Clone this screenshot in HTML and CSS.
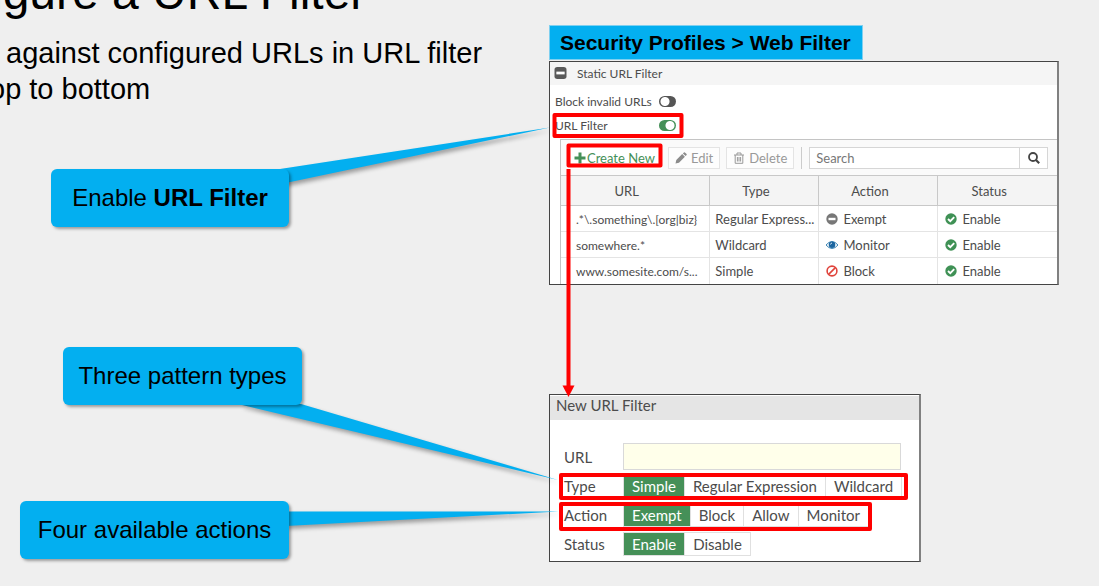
FILE: index.html
```html
<!DOCTYPE html>
<html lang="en">
<head>
<meta charset="utf-8">
<title>URL Filter</title>
<link rel="stylesheet" href="styles.css">
</head>
<body>
<main class="slide">
  <section class="copy">
    <h1 class="title">igure a URL Filter</h1>
    <p class="line">against configured URLs in URL filter</p>
    <p class="line line-cut">op to bottom</p>
  </section>

  <section class="screens">
    <h2 class="path">Security Profiles &gt; Web Filter</h2>

    <div class="panel static-panel">
      <header class="static-head">
        <svg class="collapse" viewBox="0 0 13 13"><rect x="0" y="0" width="13" height="13" rx="3" fill="#5a5a5a"/><rect x="2" y="5" width="9" height="3" fill="#fff"/></svg>
        <span>Static URL Filter</span>
      </header>
      <div class="option">
        <label class="option-label" for="invalid">Block invalid URLs</label>
        <input class="switch" type="checkbox" id="invalid">
      </div>
      <div class="option">
        <label class="option-label" for="filter">URL Filter</label>
        <input class="switch" type="checkbox" id="filter" checked>
      </div>
      <div class="listing">
        <div class="toolbar">
          <button class="tool create" type="button"><svg class="ico" viewBox="0 0 12 12"><path d="M4.500 0.500h3v4H11.500v3H7.500V11.500h-3V7.500H0.500v-3h4z" fill="#459058"/></svg>Create New</button>
          <button class="tool edit" type="button"><svg class="ico" viewBox="0 0 12 12"><path d="M0.500 11.500L1.300 8L7.200 2.100L9.900 4.800L4 10.700ZM7.900 1.400L8.900 0.400Q9.400 0 9.900 0.400L11.600 2.100Q12 2.600 11.600 3.100L10.600 4.100Z" fill="#8c8c8c"/></svg>Edit</button>
          <button class="tool delete" type="button"><svg class="ico" viewBox="0 0 12 12"><path d="M1 3h10M4 3V1h4v2M2.200 3v8.300h7.600V3M4.400 5v4.500M6 5v4.500M7.600 5v4.500" fill="none" stroke="#999"/></svg>Delete</button>
          <span class="divider"></span>
          <form class="search">
            <input class="search-box" type="text" placeholder="Search" aria-label="Search">
            <button class="search-go" type="button" aria-label="Go"><svg class="ico" viewBox="0 0 12 12"><circle cx="5" cy="5" r="4" fill="none" stroke="#444" stroke-width="1.800"/><path d="M8 8l3.200 3.200" stroke="#444" stroke-width="2.200"/></svg></button>
          </form>
        </div>
        <table class="rules">
          <colgroup><col class="c-url"><col class="c-type"><col class="c-action"><col class="c-status"></colgroup>
          <thead><tr><th>URL</th><th>Type</th><th>Action</th><th>Status</th></tr></thead>
          <tbody>
            <tr>
              <td>.*\.something\.[org|biz}</td><td>Regular Express...</td>
              <td><svg class="mark" viewBox="0 0 12 12"><circle cx="6" cy="6" r="5.700" fill="#777"/><rect x="2.500" y="4.800" width="7" height="2.400" fill="#fff"/></svg>Exempt</td>
              <td><svg class="mark" viewBox="0 0 12 12"><circle cx="6" cy="6" r="5.700" fill="#3f9155"/><path d="M3 6l2.300 2.200L9.200 4.200" fill="none" stroke="#fff" stroke-width="1.900"/></svg>Enable</td>
            </tr>
            <tr>
              <td>somewhere.*</td><td>Wildcard</td>
              <td><svg class="mark" viewBox="0 0 12 12"><path d="M0 6Q6-1 12 6Q6 13 0 6Z" fill="#fff" stroke="#3e86b5"/><circle cx="6" cy="5.700" r="3.300" fill="#1c66a0"/><path d="M4.500 5.500Q4.600 4.200 6 4" fill="none" stroke="#fff" stroke-width=".8"/></svg>Monitor</td>
              <td><svg class="mark" viewBox="0 0 12 12"><circle cx="6" cy="6" r="5.700" fill="#3f9155"/><path d="M3 6l2.300 2.200L9.200 4.200" fill="none" stroke="#fff" stroke-width="1.900"/></svg>Enable</td>
            </tr>
            <tr>
              <td>www.somesite.com/s...</td><td>Simple</td>
              <td><svg class="mark" viewBox="0 0 12 12"><g fill="none" stroke="#e0443c" stroke-width="1.600"><circle cx="6" cy="6" r="4.900"/><path d="M2.600 9.400L9.400 2.600"/></g></svg>Block</td>
              <td><svg class="mark" viewBox="0 0 12 12"><circle cx="6" cy="6" r="5.700" fill="#3f9155"/><path d="M3 6l2.300 2.200L9.200 4.200" fill="none" stroke="#fff" stroke-width="1.900"/></svg>Enable</td>
            </tr>
          </tbody>
        </table>
      </div>
    </div>

    <form class="panel new-panel">
      <header class="new-head">New URL Filter</header>
      <div class="fields">
        <div class="field">
          <label class="field-label" for="url">URL</label>
          <input class="url-box" type="text" id="url">
        </div>
        <div class="field" role="radiogroup" aria-label="Type">
          <span class="field-label">Type</span>
          <div class="choices">
            <label class="choice"><input type="radio" name="type" checked>Simple</label>
            <label class="choice"><input type="radio" name="type">Regular Expression</label>
            <label class="choice"><input type="radio" name="type">Wildcard</label>
          </div>
        </div>
        <div class="field" role="radiogroup" aria-label="Action">
          <span class="field-label">Action</span>
          <div class="choices">
            <label class="choice"><input type="radio" name="action" checked>Exempt</label>
            <label class="choice"><input type="radio" name="action">Block</label>
            <label class="choice"><input type="radio" name="action">Allow</label>
            <label class="choice"><input type="radio" name="action">Monitor</label>
          </div>
        </div>
        <div class="field" role="radiogroup" aria-label="Status">
          <span class="field-label">Status</span>
          <div class="choices">
            <label class="choice"><input type="radio" name="status" checked>Enable</label>
            <label class="choice"><input type="radio" name="status">Disable</label>
          </div>
        </div>
      </div>
    </form>
  </section>

  <div class="notes">
    <svg class="pointers" width="1099" height="586" viewBox="0 0 1099 586">
      <g class="tails" fill="#03aff0">
        <path d="M280 169L550 127.500L288 182.500L280 184Z"/>
        <path d="M242 404L301 404L558 480L242 405Z"/>
        <path d="M286 511.500L559 511.500L286 526Z"/>
      </g>
      <g fill="none" stroke="#f00" stroke-width="4" stroke-linejoin="round">
        <rect x="554.500" y="115" width="127" height="21"/>
        <rect x="568.500" y="145.500" width="92" height="20"/>
        <rect x="561" y="475" width="345" height="23"/>
        <rect x="561" y="504" width="309" height="25"/>
        <path d="M568.500 169V388"/>
      </g>
      <path d="M562.500 385.500H574.500L568.500 397Z" fill="#f00"/>
    </svg>
    <div class="callout callout-enable"><span>Enable <strong>URL Filter</strong></span></div>
    <div class="callout callout-types">Three pattern types</div>
    <div class="callout callout-actions">Four available actions</div>
  </div>
</main>
</body>
</html>
```
FILE: styles.css
```css
* { box-sizing: border-box; }
body {
  margin: 0;
  background: #efefef;
  color: #000;
  font-family: "Liberation Sans", Arial, sans-serif;
  overflow: hidden;
}
button, input { font: inherit; color: inherit; margin: 0; }
.slide {
  position: relative;
  display: grid;
  grid-template-columns: 549px minmax(0, 1fr);
  min-height: 100vh;
  overflow: hidden;
}

/* Left copy */
.title {
  margin: -34px 0 15px;
  font-size: 48px;
  line-height: 54px;
  font-weight: 400;
  text-indent: -8px;
  white-space: nowrap;
}
.line {
  margin: 0;
  padding-left: 6px;
  font-size: 29px;
  line-height: 36px;
  white-space: nowrap;
}
.line-cut { padding-left: 0; text-indent: -11px; }

/* Right screens */
.screens { padding: 25px 40px 20px 0; }
.path {
  width: fit-content;
  margin: 0 0 1px;
  padding: 0 11px 0 10px;
  border: 1px solid #7fd0f0;
  background: #03aff0;
  font-size: 21px;
  line-height: 33px;
}
.panel {
  border: 1px solid #444;
  border-right: 2px solid #808080;
  background: #fff;
  color: #4c4c4c;
  font-family: Lato, sans-serif;
}
.static-panel { font-size: 13px; margin-bottom: 109px; }
.static-head {
  display: flex;
  align-items: center;
  gap: 10px;
  height: 23px;
  margin-bottom: 4px;
  padding: 0 0 1px 4px;
  background: #f5f5f5;
  font-size: 12px;
}
.collapse { width: 13px; height: 12px; }
.option {
  display: flex;
  align-items: center;
  height: 24px;
  padding-left: 5px;
  font-size: 12px;
}
.option-label { width: 104px; white-space: nowrap; }
.switch {
  appearance: none;
  width: 17px;
  height: 11px;
  border-radius: 6px;
  background: radial-gradient(circle at 6px 50%, #fff 4px, #555 5px);
}
.switch:checked { background: radial-gradient(circle at 11px 50%, #fff 4px, #459058 5px); }
.listing {
  margin: 2px 0 0 10px;
  border: solid #c4c4c4;
  border-width: 1px 0 0 1px;
}
.toolbar {
  display: flex;
  align-items: center;
  height: 35px;
  padding: 0 9px 0 6px;
  gap: 6px;
  background: #fafafa;
}
.tool {
  display: flex;
  align-items: center;
  gap: 4px;
  height: 22px;
  padding: 0 6px;
  border: 1px solid #e4e4e4;
  background: #fdfdfd;
  color: #999;
  white-space: nowrap;
}
.create { gap: 1px; border-color: #fff; background: #fff; color: #459058; }
.ico { width: 12px; height: 12px; flex: none; }
.divider { width: 1px; height: 22px; margin: 0 1px; background: #ccc; }
.search { display: flex; flex: 1; min-width: 0; height: 22px; border: 1px solid #d6d6d6; }
.search-box { flex: 1; min-width: 0; padding: 0 6px; border: 0; background: #fff; }
.search-box::placeholder { color: #777; opacity: 1; }
.search-go {
  display: flex;
  align-items: center;
  justify-content: center;
  width: 28px;
  padding: 0;
  border: 0;
  border-left: 1px solid #d6d6d6;
  background: #fff;
}
.rules { width: 100%; table-layout: fixed; border-collapse: collapse; }
.c-url { width: 30%; }
.c-type { width: 22%; }
.c-action { width: 24%; }
.c-status { width: 24%; }
.rules th {
  height: 30px;
  padding: 0 17px 0 0;
  border: 1px solid #c8c8c8;
  background: #f4f4f4;
  font-weight: 400;
}
.rules th:first-child, .rules td:first-child { border-left: 0; }
.rules th:last-child, .rules td:last-child { border-right: 0; }
.rules td {
  height: 26px;
  padding: 1px 0 0 5px;
  border: 1px solid #e4e4e4;
  border-top-color: #ddd;
  white-space: nowrap;
}
.rules td:first-child { padding-left: 15px; font-size: 12px; }
.rules td:nth-child(n+3) { padding-left: 7px; }
.rules tr:last-child td { border-bottom: 0; }
.mark { width: 12px; height: 12px; margin-right: 5px; vertical-align: -1px; }

/* New filter form */
.new-panel { width: fit-content; padding-top: 1px; font-size: 15px; }
.new-head {
  height: 24px;
  padding-left: 6px;
  background: #e5e5e5;
  line-height: 19px;
}
.fields { display: grid; gap: 5px; padding: 25px 18px 5px 14px; }
.field { display: flex; align-items: center; height: 24px; }
.field-label { width: 59px; }
.url-box {
  width: 278px;
  height: 27px;
  padding: 0 6px;
  border: 1px solid #d9d9d9;
  background: #ffffea;
}
.choices { display: flex; height: 24px; margin-right: -8px; border: 1px solid #e0e0e0; }
.choice {
  display: flex;
  align-items: center;
  padding: 0 8px;
  border-left: 1px solid #e0e0e0;
}
.choice:first-child { border-left: 0; }
.choice:has(:checked) { background: #459058; color: #fff; }
.choice input { position: absolute; opacity: 0; pointer-events: none; }

/* Annotations drawn over the slide */
.notes { position: absolute; inset: 0; pointer-events: none; }
.pointers { position: absolute; left: 0; top: 0; }
.tails { filter: drop-shadow(2px 3px 2px rgba(0, 0, 0, .35)); }
.callout {
  position: absolute;
  display: flex;
  align-items: center;
  justify-content: center;
  height: 58px;
  border-radius: 6px;
  background: #03aff0;
  box-shadow: 2px 2px 3px rgba(0, 0, 0, .35);
  font-size: 24px;
  white-space: nowrap;
}
.callout-enable { left: 51px; top: 169px; width: 238px; }
.callout-types { left: 63px; top: 347px; width: 239px; }
.callout-actions { left: 20px; top: 501px; width: 269px; }
```
